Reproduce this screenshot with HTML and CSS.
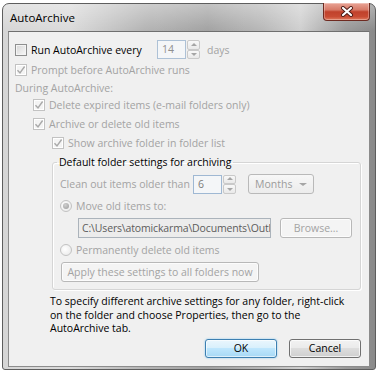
FILE: index.html
```html
<!DOCTYPE html>
<html lang="en">
<head>
    <meta charset="UTF-8">
    <title>AutoArchive</title>
    <link rel="stylesheet" href="styles.css">
</head>
<body>

<div class="window">
    <div class="titlebar">
        <span class="title">AutoArchive</span>
        <div class="close-btn">
            <svg width="14" height="11" viewBox="0 0 14 11">
                <path d="M3 2 L11 9 M11 2 L3 9" stroke="#4a1a14" stroke-width="4" stroke-linecap="round"/>
                <path d="M3 2 L11 9 M11 2 L3 9" stroke="#ffffff" stroke-width="2.2" stroke-linecap="round"/>
            </svg>
        </div>
    </div>

    <div class="client">
        <div class="options">
            <div class="row row-main">
                <span class="check"></span>
                <span class="label label-run">Run AutoArchive every</span>
                <div class="spin">
                    <span class="spin-field spin-days">14</span>
                    <span class="spin-arrows"><span class="arrow up"></span><span class="arrow down"></span></span>
                </div>
                <span class="label disabled label-days">days</span>
            </div>
            <div class="row">
                <span class="check off checked">
                    <svg width="10" height="10" viewBox="0 0 10 10"><path d="M1.5 5.2 L4 8 L8.6 1.5" fill="none" stroke="#a9a9a9" stroke-width="1.4"/></svg>
                </span>
                <span class="label disabled">Prompt before AutoArchive runs</span>
            </div>
            <div class="row row-note">
                <span class="label disabled">During AutoArchive:</span>
            </div>
            <div class="row indent-1">
                <span class="check off checked">
                    <svg width="10" height="10" viewBox="0 0 10 10"><path d="M1.5 5.2 L4 8 L8.6 1.5" fill="none" stroke="#a9a9a9" stroke-width="1.4"/></svg>
                </span>
                <span class="label disabled">Delete expired items (e-mail folders only)</span>
            </div>
            <div class="row indent-1">
                <span class="check off checked">
                    <svg width="10" height="10" viewBox="0 0 10 10"><path d="M1.5 5.2 L4 8 L8.6 1.5" fill="none" stroke="#a9a9a9" stroke-width="1.4"/></svg>
                </span>
                <span class="label disabled">Archive or delete old items</span>
            </div>
            <div class="row indent-2">
                <span class="check off checked">
                    <svg width="10" height="10" viewBox="0 0 10 10"><path d="M1.5 5.2 L4 8 L8.6 1.5" fill="none" stroke="#a9a9a9" stroke-width="1.4"/></svg>
                </span>
                <span class="label disabled">Show archive folder in folder list</span>
            </div>

            <fieldset class="group">
                <legend>Default folder settings for archiving</legend>
                <div class="row row-field">
                    <span class="label disabled label-clean">Clean out items older than</span>
                    <div class="spin">
                        <span class="spin-field spin-months">6</span>
                        <span class="spin-arrows"><span class="arrow up"></span><span class="arrow down"></span></span>
                    </div>
                    <div class="combo">
                        <span>Months</span>
                        <span class="arrow down combo-arrow"></span>
                    </div>
                </div>
                <div class="row">
                    <span class="radio selected"><span class="dot"></span></span>
                    <span class="label disabled">Move old items to:</span>
                </div>
                <div class="row row-field row-path">
                    <div class="textbox">C:\Users\atomickarma\Documents\Outl</div>
                    <div class="button disabled browse">Browse...</div>
                </div>
                <div class="row">
                    <span class="radio"></span>
                    <span class="label disabled">Permanently delete old items</span>
                </div>
                <div class="row row-field">
                    <div class="button disabled apply">Apply these settings to all folders now</div>
                </div>
            </fieldset>
        </div>

        <div class="footer">
            <p class="note">To specify different archive settings for any folder, right-click on the folder and choose Properties, then go to the AutoArchive tab.</p>
            <div class="actions">
                <div class="button default">OK</div>
                <div class="button">Cancel</div>
            </div>
        </div>
    </div>
</div>

</body>
</html>
```

FILE: styles.css
```css
body {
    margin: 0;
    background: #ffffff;
    font-family: "Open Sans", "Noto Sans", sans-serif;
    font-size: 10.5px;
    color: #000000;
}
.window {
    margin: 3px 0 0 2px;
    width: 374px;
    height: 367px;
    box-sizing: border-box;
    padding: 0 5px 2px;
    border: 1px solid #5e5e5e;
    border-radius: 7px 7px 3px 3px;
    background:
        linear-gradient(to bottom, rgba(255, 255, 255, 0.35), rgba(255, 255, 255, 0) 27px),
        linear-gradient(90deg, #d6d6d6 0%, #dadada 18%, #b4b4b4 38%, #a2a2a2 55%, #b8b8b8 70%, #cfcfcf 80%, #9a9a9a 92%, #8a8a8a 100%);
}
.titlebar {
    height: 27px;
    display: flex;
    justify-content: space-between;
    padding-left: 2px;
}
.title {
    align-self: center;
    font-size: 11.5px;
    color: #000000;
    margin-top: -1px;
}
.close-btn {
    margin-top: -1px;
    width: 47px;
    height: 18px;
    box-sizing: border-box;
    border: 1px solid #6e2a20;
    border-top: none;
    border-radius: 0 0 4px 4px;
    background: linear-gradient(to bottom, #e9a496 0%, #d77a68 40%, #c0412b 52%, #c84b33 80%, #de7a5e 100%);
    display: flex;
    align-items: center;
    justify-content: center;
    box-shadow: inset 0 0 0 1px rgba(255, 255, 255, 0.3);
}
.client {
    height: 336px;
    box-sizing: border-box;
    border: 1px solid #8c8c8c;
    border-top-color: #6f6f6f;
    background: #f0f0f0;
}
.options {
    display: flex;
    flex-direction: column;
    gap: 3px;
    padding: 8px 8px 0 6px;
}
.row {
    display: flex;
    align-items: center;
    height: 16px;
    white-space: nowrap;
}
.row-main {
    height: 19px;
}
.row-note {
    height: 13px;
}
.row-field {
    height: 20px;
}
.indent-1 {
    padding-left: 18px;
}
.indent-2 {
    padding-left: 37px;
}
.label {
    line-height: 16px;
}
.disabled {
    color: #a3a3a3;
}
.label-run {
    min-width: 126px;
}
.label-days {
    margin-left: 7px;
}
.label-clean {
    min-width: 133px;
}
.check {
    width: 12px;
    height: 12px;
    box-sizing: border-box;
    margin-right: 4px;
    border: 1px solid #8e8f8f;
    background: linear-gradient(135deg, #d5d5d5, #f9f9f9);
    box-shadow: inset 0 0 0 1px #f4f4f4;
    display: flex;
    align-items: center;
    justify-content: center;
}
.check.off {
    border-color: #c2c2c2;
    background: #f4f4f4;
    box-shadow: inset 0 0 0 1px #ffffff;
}
.radio {
    width: 12px;
    height: 12px;
    box-sizing: border-box;
    margin-right: 4px;
    border: 1px solid #c2c2c2;
    border-radius: 50%;
    background: radial-gradient(circle at 40% 40%, #ffffff, #e6e6e6);
    display: flex;
    align-items: center;
    justify-content: center;
}
.dot {
    width: 6px;
    height: 6px;
    border-radius: 50%;
    background: radial-gradient(circle at 40% 35%, #d0d0d0, #9a9a9a);
}
.spin {
    display: flex;
    height: 19px;
}
.spin-field {
    box-sizing: border-box;
    height: 19px;
    border: 1px solid #adc1d6;
    background: #f4f6f8;
    color: #8f8f8f;
    padding-left: 4px;
    line-height: 17px;
}
.spin-days {
    width: 29px;
}
.spin-months {
    width: 29px;
    color: #7c7c7c;
    border-color: #9fb8d3;
}
.spin-arrows {
    width: 13px;
    margin-left: 1px;
    display: flex;
    flex-direction: column;
}
.spin-arrows .arrow {
    flex: 1;
    border: 1px solid #c9c9c9;
    border-radius: 2px;
    background: linear-gradient(#f8f8f8, #e9e9e9);
    position: relative;
}
.arrow::after {
    content: "";
    position: absolute;
    left: 50%;
    top: 50%;
    margin-left: -3px;
    border-left: 3px solid transparent;
    border-right: 3px solid transparent;
}
.arrow.up::after {
    margin-top: -2px;
    border-bottom: 3px solid #a5a5a5;
}
.arrow.down::after {
    margin-top: -1px;
    border-top: 3px solid #a5a5a5;
}
.combo {
    margin-left: 12px;
    width: 66px;
    height: 20px;
    box-sizing: border-box;
    border: 1px solid #b9b9b9;
    border-radius: 3px;
    background: linear-gradient(#f7f7f7, #ececec);
    color: #9b9b9b;
    display: flex;
    align-items: center;
    justify-content: space-between;
    padding: 0 6px 0 6px;
}
.combo-arrow {
    position: relative;
    width: 8px;
    height: 6px;
}
.combo-arrow::after {
    margin-left: -4px;
    border-left-width: 4px;
    border-right-width: 4px;
    border-top: 4px solid #a9a9a9;
    margin-top: -2px;
}
.group {
    margin: 0 0 0 37px;
    padding: 4px 8px 7px 7px;
    border: 1px solid #d5d5d5;
    border-radius: 3px;
    box-shadow: inset 1px 1px 0 #ffffff, 1px 1px 0 #ffffff;
    display: flex;
    flex-direction: column;
    gap: 4px;
}
.group legend {
    padding: 0 2px;
    margin-left: -3px;
    line-height: 16px;
}
.row-path {
    padding-left: 18px;
}
.textbox {
    width: 193px;
    height: 20px;
    box-sizing: border-box;
    border: 1px solid #abb3bb;
    background: #ececec;
    color: #5c5c5c;
    padding-left: 3px;
    line-height: 18px;
    letter-spacing: -0.15px;
    overflow: hidden;
    white-space: nowrap;
}
.button {
    width: 72px;
    height: 19px;
    box-sizing: border-box;
    border: 1px solid #707070;
    border-radius: 3px;
    background: linear-gradient(#f2f2f2 0%, #ebebeb 45%, #dddddd 50%, #cfcfcf 100%);
    box-shadow: inset 0 0 0 1px rgba(255, 255, 255, 0.7);
    display: flex;
    align-items: center;
    justify-content: center;
}
.button.disabled {
    border-color: #b8b8b8;
    background: #f4f4f4;
    color: #a3a3a3;
}
.browse {
    margin-left: 9px;
    height: 20px;
}
.apply {
    width: 198px;
    height: 20px;
    margin-left: 1px;
}
.button.default {
    border-color: #3c7fb1;
    background: linear-gradient(#eaf6fd 0%, #d9f0fc 45%, #bee6fd 50%, #a7d9f5 100%);
    box-shadow: inset 0 0 0 1px rgba(255, 255, 255, 0.6), 0 0 2px #7ec4ee;
}
.footer {
    padding: 0 8px 0 41px;
}
.note {
    margin: 5px 0 0;
    padding-right: 12px;
    line-height: 13.5px;
}
.actions {
    display: flex;
    justify-content: flex-end;
    gap: 12px;
    margin-top: 3px;
}
```
